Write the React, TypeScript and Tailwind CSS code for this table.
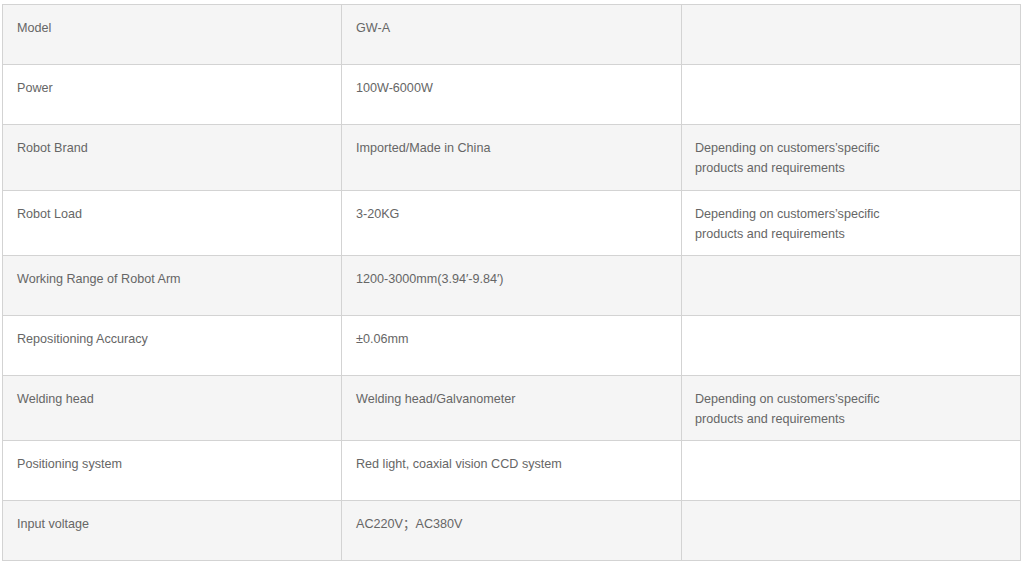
import React from "react";

const rows: { a: string; b: string; c?: string; h: string }[] = [
  { a: "Model", b: "GW-A", h: "h-[60px]" },
  { a: "Power", b: "100W-6000W", h: "h-[60px]" },
  { a: "Robot Brand", b: "Imported/Made in China", c: "Depending on customers’specific products and requirements", h: "h-[66px]" },
  { a: "Robot Load", b: "3-20KG", c: "Depending on customers’specific products and requirements", h: "h-[65px]" },
  { a: "Working Range of Robot Arm", b: "1200-3000mm(3.94′-9.84′)", h: "h-[60px]" },
  { a: "Repositioning Accuracy", b: "±0.06mm", h: "h-[60px]" },
  { a: "Welding head", b: "Welding head/Galvanometer", c: "Depending on customers’specific products and requirements", h: "h-[65px]" },
  { a: "Positioning system", b: "Red light, coaxial vision CCD system", h: "h-[60px]" },
  { a: "Input voltage", b: "AC220V；AC380V", h: "h-[60px]" },
];

export default function App() {
  return (
    <div className="w-[1024px] h-[566px] bg-white overflow-hidden pt-[4px] pl-[2px]" style={{ fontFamily: '"Liberation Sans", Arial, "Noto Sans CJK SC", sans-serif' }}>
      <div className="w-[1019px] border-t border-l border-[#d3d3d3] grid grid-cols-[339px_340px_339px] text-[12.6px] leading-[20px] text-[#666666]">
        {rows.map((r, i) => {
          const bg = i % 2 === 0 ? "bg-[#f5f5f5]" : "bg-white";
          const cell = `${bg} ${r.h} border-r border-b border-[#d3d3d3] pt-[13px] pl-[14px] pr-[14px]`;
          return (
            <React.Fragment key={i}>
              <div className={cell}>{r.a}</div>
              <div className={cell}>{r.b}</div>
              <div className={`${bg} ${r.h} border-r border-b border-[#d3d3d3] pt-[13px] pl-[13px] pr-[14px]`}>
                {r.c ? <div className="w-[200px]">{r.c}</div> : null}
              </div>
            </React.Fragment>
          );
        })}
      </div>
    </div>
  );
}
